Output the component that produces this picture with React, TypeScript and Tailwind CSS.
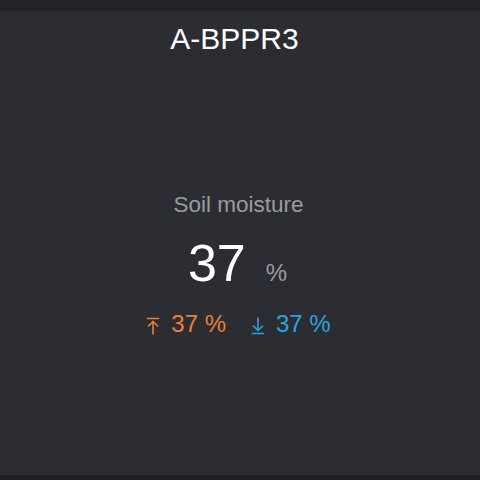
import React from 'react';

const FONT = { fontFamily: '"Liberation Sans", Arial, sans-serif' };

function ArrowUpBar({ className }: { className?: string }) {
  return (
    <svg viewBox="0 0 14 18" className={className} fill="none" stroke="currentColor" strokeWidth={1.6} strokeLinecap="round" strokeLinejoin="round">
      <path d="M1.5 1.5h11" />
      <path d="M7 4.5v12.5" />
      <path d="M2.5 9l4.5-4.5 4.5 4.5" />
    </svg>
  );
}

function ArrowDownBar({ className }: { className?: string }) {
  return (
    <svg viewBox="0 0 14 18" className={className} fill="none" stroke="currentColor" strokeWidth={1.6} strokeLinecap="round" strokeLinejoin="round">
      <path d="M7 1v12.5" />
      <path d="M2.5 9l4.5 4.5 4.5-4.5" />
      <path d="M1.5 16.5h11" />
    </svg>
  );
}

export default function App() {
  return (
    <div className="w-[480px] h-[480px] flex flex-col bg-[#1f2023]" style={FONT}>
      <div className="h-[11px] bg-[#222327]" />
      <div className="h-[464px] bg-[#2c2d32] flex flex-col items-center pr-[3px]">
        <h1 className="mt-[13px] mr-[8px] text-[30px] leading-[30px] text-white">A-BPPR3</h1>

        <p className="mt-[140px] text-[22.5px] leading-[22px] text-[#9a9ba1]">Soil moisture</p>

        <div className="mt-[21px] mr-[2px] flex items-baseline gap-[20px]">
          <span className="text-[52px] leading-[52px] text-white">37</span>
          <span className="text-[24px] leading-[24px] text-[#9a9ba1]">%</span>
        </div>

        <div className="mt-[23px] flex items-center gap-[25px] text-[24px] leading-[24px]">
          <div className="flex items-center gap-[11px] text-[#e8803a]">
            <ArrowUpBar className="w-[14px] h-[18px] mt-[3px]" />
            <span>37 %</span>
          </div>
          <div className="flex items-center gap-[11px] text-[#2ba3dd]">
            <ArrowDownBar className="w-[14px] h-[18px] mt-[3px]" />
            <span>37 %</span>
          </div>
        </div>
      </div>
    </div>
  );
}
